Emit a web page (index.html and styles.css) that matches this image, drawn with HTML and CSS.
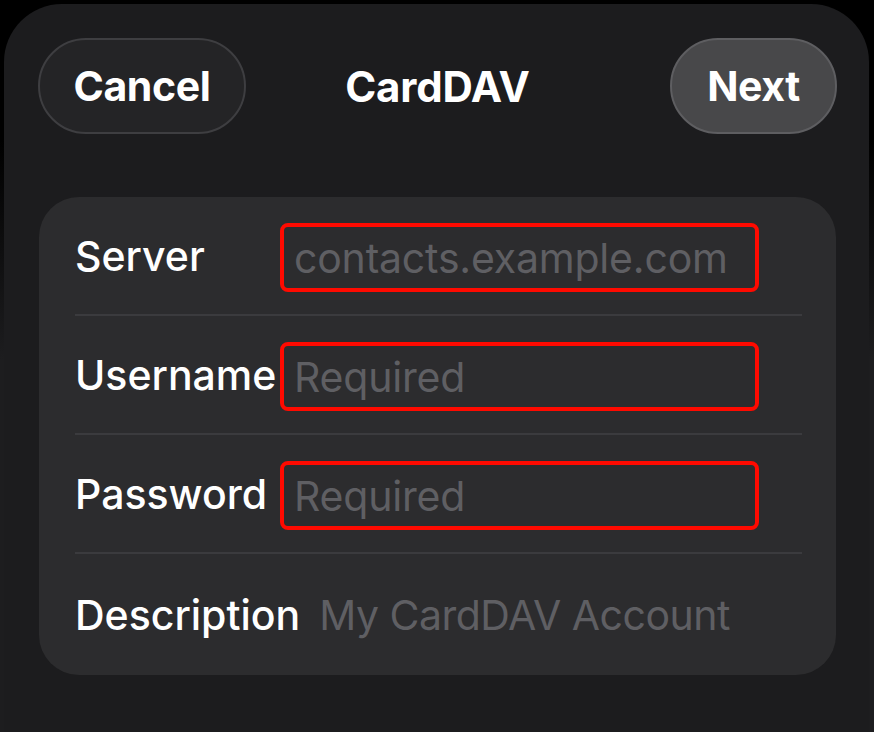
FILE: index.html
```html
<!DOCTYPE html>
<html lang="en">
<head>
<meta charset="utf-8">
<title>CardDAV</title>
<link rel="stylesheet" href="styles.css">
</head>
<body>
  <div class="sheet">
    <header class="nav">
      <button class="btn btn-cancel">Cancel</button>
      <h1 class="title">CardDAV</h1>
      <button class="btn btn-next">Next</button>
    </header>
    <section class="card">
      <div class="row">
        <span class="label">Server</span>
        <div class="field"><span class="placeholder">contacts.example.com</span></div>
      </div>
      <div class="row">
        <span class="label">Username</span>
        <div class="field"><span class="placeholder">Required</span></div>
      </div>
      <div class="row">
        <span class="label">Password</span>
        <div class="field"><span class="placeholder">Required</span></div>
      </div>
      <div class="row row-desc">
        <span class="label">Description</span>
        <span class="placeholder">My CardDAV Account</span>
      </div>
    </section>
  </div>
</body>
</html>
```
FILE: styles.css
```css
* { box-sizing: border-box; }
html, body {
  margin: 0;
  height: 100%;
  overflow: hidden;
}
body {
  background: linear-gradient(#000 0, #000 140px, #1d1d1f 360px);
  font-family: Inter, "Noto Sans", sans-serif;
  color: #fff;
}
.sheet {
  margin: 4px 5px 0 4px;
  height: 728px;
  background: #1c1c1e;
  border-radius: 58px 58px 0 0;
  padding: 34px 32px 0 34px;
}
.nav {
  display: grid;
  grid-template-columns: 1fr auto 1fr;
  align-items: center;
  height: 96px;
}
.btn {
  height: 96px;
  border-radius: 48px;
  font-family: Inter, sans-serif;
  font-size: 41px;
  font-weight: 700;
  color: #fff;
  letter-spacing: -0.4px;
  padding: 0;
  cursor: pointer;
}
.btn-cancel {
  justify-self: start;
  width: 208px;
  background: #242426;
  border: 2px solid #3e3e41;
}
.btn-next {
  justify-self: end;
  width: 167px;
  background: #48484a;
  border: 2px solid #5e5e61;
}
.title {
  margin: 0;
  font-size: 42px;
  font-weight: 700;
  letter-spacing: -0.2px;
}
.card {
  margin: 63px 1px 0 1px;
  background: #2c2c2e;
  border-radius: 40px;
  padding: 0 34px 0 36px;
}
.row {
  height: 119px;
  display: flex;
  align-items: center;
  border-bottom: 2px solid #3b3b3e;
}
.row:last-child { border-bottom: none; height: 121px; }
.label {
  width: 205px;
  flex-shrink: 0;
  font-size: 41px;
  font-weight: 500;
  white-space: nowrap;
  letter-spacing: 0;
}
.row-desc .label {
  width: auto;
  margin-right: 19px;
}
.field {
  width: 479px;
  height: 69px;
  margin-top: 4px;
  border: 4px solid #ff0a00;
  border-radius: 8px;
  padding-left: 10px;
  display: flex;
  align-items: center;
}
.placeholder {
  font-size: 41px;
  color: #5f5f63;
  white-space: nowrap;
  letter-spacing: -0.2px;
}
.row-desc .placeholder {
  letter-spacing: -0.5px;
}
```
